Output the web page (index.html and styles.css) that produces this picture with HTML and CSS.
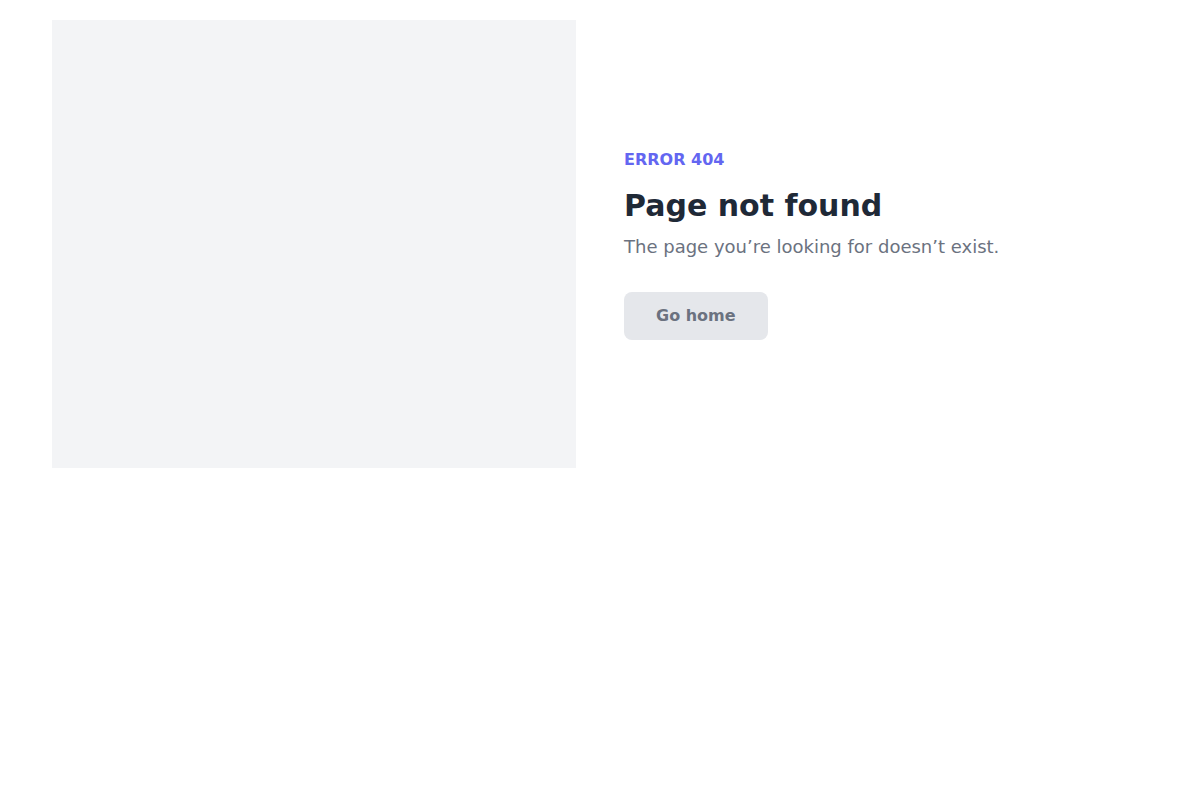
FILE: index.html
```html
<!DOCTYPE html>
<html lang="en">
<head>
  <meta charset="UTF-8">
  <meta name="viewport" content="width=device-width, initial-scale=1">
  <title>Page not found</title>
  <link rel="stylesheet" href="styles.css">
</head>
<body>
  <div class="page">
    <div class="art"></div>
    <div class="content">
      <div class="code">ERROR 404</div>
      <h1>Page not found</h1>
      <p class="lead">The page you’re looking for doesn’t exist.</p>
      <div class="actions">
        <a href="index.html" class="btn">Go home</a>
      </div>
    </div>
  </div>
</body>
</html>
```

FILE: styles.css
```css
body {
  font-family: "DejaVu Sans", Verdana, sans-serif;
  margin: 0;
  background-color: #fff;
  color: #1f2937;
}

.page {
  display: grid;
  grid-template-columns: 1fr 1fr;
  gap: 48px;
  padding: 20px 52px;
  align-items: center;
}

.art {
  height: 448px;
  background-color: #f3f4f6;
}

.code {
  font-size: 16px;
  line-height: 24px;
  font-weight: bold;
  color: #6366f1;
}

h1 {
  font-size: 30px;
  line-height: 36px;
  font-weight: bold;
  margin: 16px 0 0;
  color: #1f2937;
}

.lead {
  font-size: 18px;
  line-height: 28px;
  margin: 9px 0 0;
  color: #6b7280;
}

.actions {
  margin-top: 31px;
}

.btn {
  display: inline-block;
  background-color: #e5e7eb;
  color: #6b7280;
  font-size: 16px;
  line-height: 24px;
  font-weight: bold;
  padding: 12px 32px;
  border-radius: 8px;
  text-decoration: none;
}
```
